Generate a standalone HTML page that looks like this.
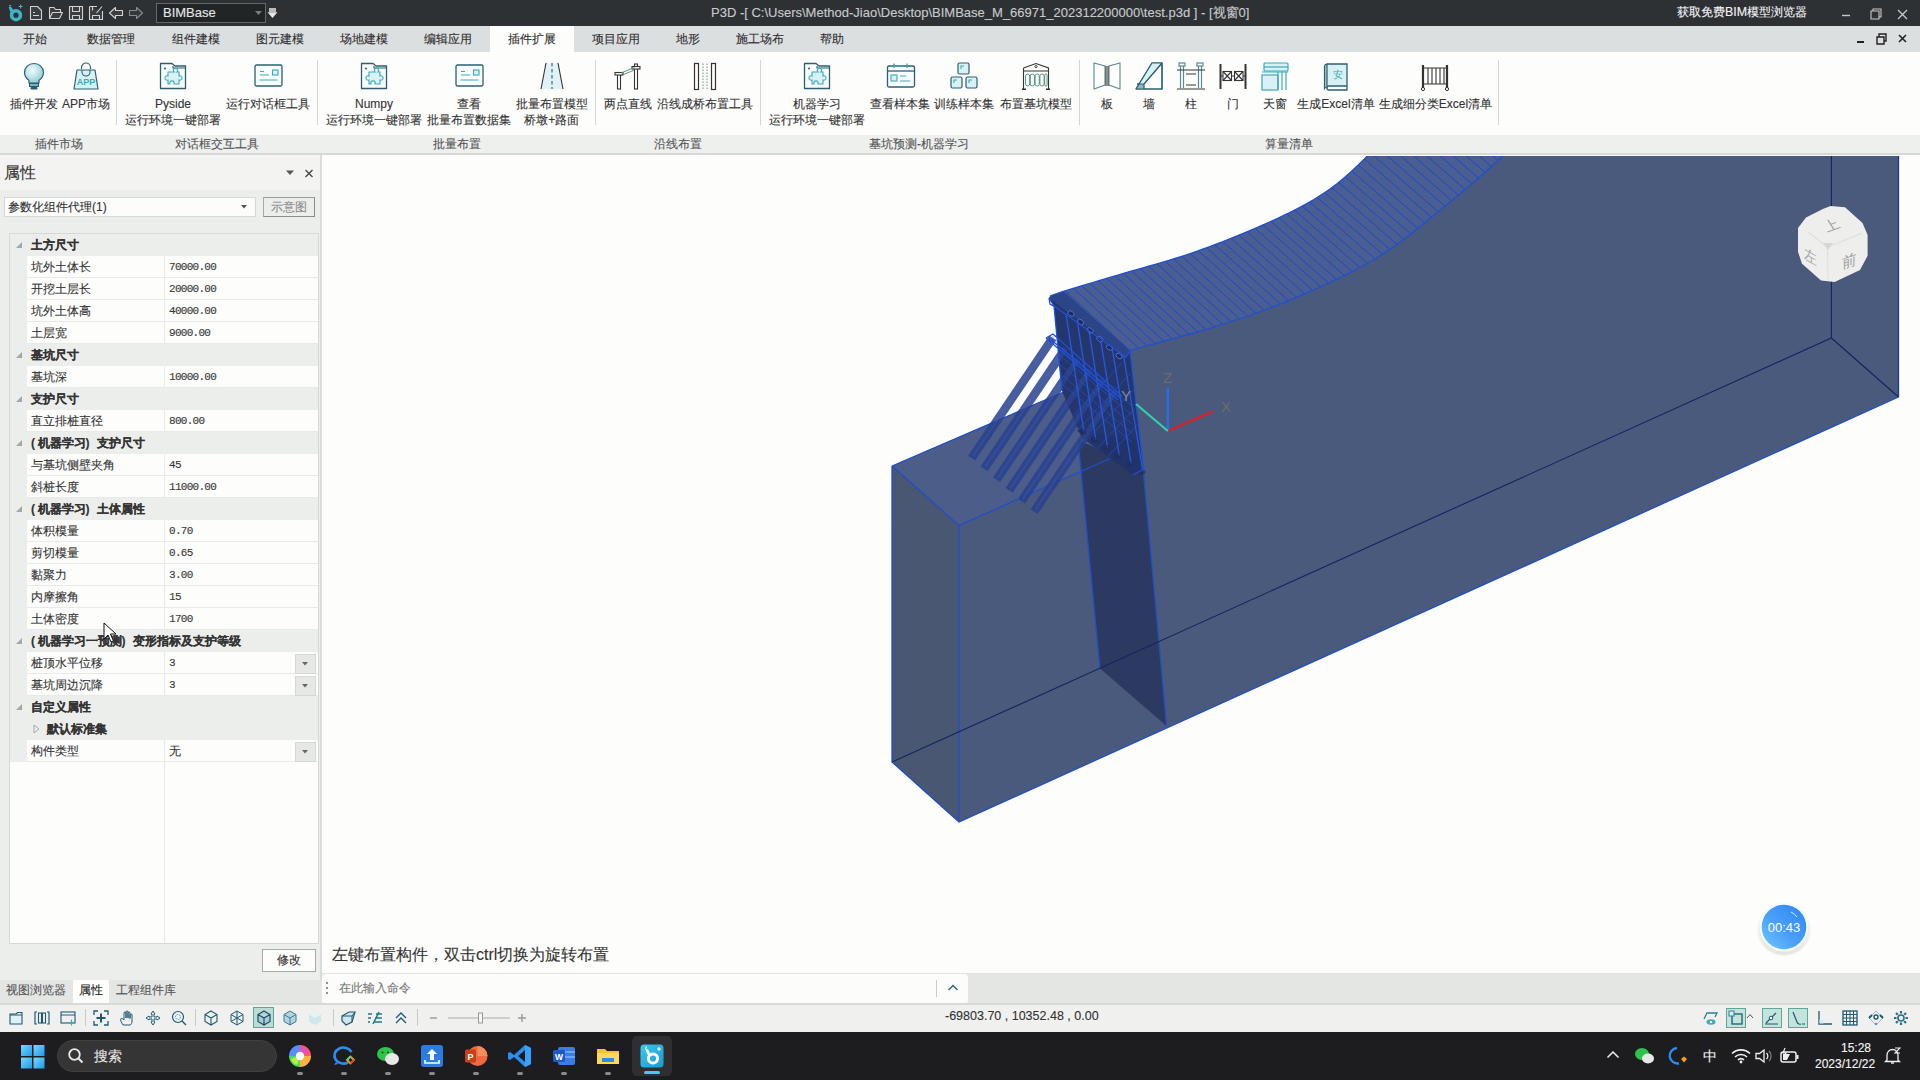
<!DOCTYPE html>
<html><head><meta charset="utf-8">
<style>
*{box-sizing:border-box}
html,body{margin:0;padding:0}
body{width:1920px;height:1080px;overflow:hidden;position:relative;background:#fdfefc;font-family:"Liberation Sans",sans-serif;color:#333}
.a{position:absolute}
.t{position:absolute;white-space:nowrap;line-height:1;-webkit-text-stroke:0.12px currentColor}
svg{position:absolute;overflow:visible}
</style></head><body>

<!-- ===== TITLE BAR ===== -->
<div class="a" style="left:0;top:0;width:1920px;height:26px;background:#2d3134"></div>
<!-- ===== TAB BAR ===== -->
<div class="a" style="left:0;top:26px;width:1920px;height:26px;background:#dcdfe0"></div>
<div class="a" style="left:490px;top:26px;width:84px;height:26px;background:#fdfefc"></div>
<!-- ===== RIBBON ===== -->
<div class="a" style="left:0;top:52px;width:1920px;height:83px;background:#fdfefc"></div>
<div class="a" style="left:0;top:135px;width:1920px;height:18px;background:#eef0ee"></div>
<div class="a" style="left:0;top:153px;width:1920px;height:2px;background:#d6d9d8"></div>


<!-- quick access -->
<svg style="left:0;top:0" width="150" height="26" viewBox="0 0 150 26">
<circle cx="16" cy="15.2" r="4.4" fill="none" stroke="#3db4c4" stroke-width="3.6"/><path d="M10.6 8.6L12.4 12.2" stroke="#3db4c4" stroke-width="3.2" stroke-linecap="round"/>
<path d="M9 5.5H11L9 7.5H11" stroke="#3db4c4" stroke-width="0.9" fill="none"/><path d="M20.6 4.5V8.5M18.6 6.5H22.6" stroke="#3db4c4" stroke-width="1.1"/>
<g fill="#3a3e41" stroke="#d2d2d2" stroke-width="1.1" stroke-linejoin="round">
<path d="M30.5 6.5H37.5L41.5 10.5V19.5H30.5Z"/><path d="M33 12.5H35M33 15.5H39" fill="none"/>
<path d="M49.5 7.5H54L55.5 9.5H60.5V12.5H53L49.5 18.5Z"/><path d="M49.5 18.5L52.5 12.5H62.5L59.5 18.5Z"/>
<path d="M69.5 6.5H82.5V19.5H69.5Z"/><path d="M72.5 6.5V11.5H79.5V6.5M72.5 19.5V15.5H79.5V19.5" fill="none"/>
<path d="M89.5 6.5H97M102.5 11V19.5H89.5V6.5"/><path d="M92.5 6.5V10.5M92.5 19.5V15.5H99.5V19.5M96.5 13L102 6.5" fill="none"/>
<path d="M109.5 13L115.5 7.5V10.5H122.5V15.5H115.5V18.5Z"/>
</g>
<path d="M142.5 13L136.5 7.5V10.5H129.5V15.5H136.5V18.5Z" fill="#34383b" stroke="#8a8d90" stroke-width="1.1" stroke-linejoin="round"/>
</svg>
<!-- title content -->
<div class="a" style="left:156px;top:3px;width:110px;height:20px;background:#222526;border:1px solid #66696b"></div>
<div class="t" style="left:163px;top:6px;font-size:13px;color:#e6e6e6">BIMBase</div>
<svg style="left:255px;top:11px" width="8" height="5"><path d="M0 0H7L3.5 4Z" fill="#7a7d80"/></svg>
<svg style="left:268px;top:8px" width="9" height="11"><path d="M1 1H8M1 3H8M1 5H8L4.5 9Z" stroke="#e8e8e8" stroke-width="1.3" fill="#e8e8e8"/></svg>
<div class="t" style="left:711px;top:5.5px;font-size:13px;color:#c9cacb">P3D -[ C:\Users\Method-Jiao\Desktop\BIMBase_M_66971_202312200000\test.p3d ] - [视窗0]</div>
<div class="t" style="left:1677px;top:6px;font-size:12.4px;color:#f4f4f4">获取免费BIM模型浏览器</div>
<svg style="left:1840px;top:8px" width="80" height="14">
<path d="M2 7.5H10" stroke="#c8c8c8" stroke-width="1.4"/>
<path d="M31 3H39V11H31Z M33 3V1H41V9H39" stroke="#c8c8c8" stroke-width="1.1" fill="none"/>
<path d="M58 2L67 11M67 2L58 11" stroke="#c8c8c8" stroke-width="1.3"/>
</svg>
<!-- tabs -->
<div class="t" style="left:23px;top:33px;font-size:12px;color:#303030">开始</div>
<div class="t" style="left:87px;top:33px;font-size:12px;color:#303030">数据管理</div>
<div class="t" style="left:172px;top:33px;font-size:12px;color:#303030">组件建模</div>
<div class="t" style="left:256px;top:33px;font-size:12px;color:#303030">图元建模</div>
<div class="t" style="left:340px;top:33px;font-size:12px;color:#303030">场地建模</div>
<div class="t" style="left:424px;top:33px;font-size:12px;color:#303030">编辑应用</div>
<div class="t" style="left:508px;top:33px;font-size:12px;color:#303030">插件扩展</div>
<div class="t" style="left:592px;top:33px;font-size:12px;color:#303030">项目应用</div>
<div class="t" style="left:676px;top:33px;font-size:12px;color:#303030">地形</div>
<div class="t" style="left:736px;top:33px;font-size:12px;color:#303030">施工场布</div>
<div class="t" style="left:820px;top:33px;font-size:12px;color:#303030">帮助</div>
<svg style="left:1855px;top:32px" width="60" height="14">
<path d="M2 10H9" stroke="#222" stroke-width="2"/>
<path d="M22 5H29V12H22Z M24 5V2H31V9H29" stroke="#222" stroke-width="1.4" fill="none"/>
<path d="M44 3L51 10M51 3L44 10" stroke="#222" stroke-width="1.6"/>
</svg>
<!-- ribbon separators -->
<div class="a" style="left:116px;top:60px;width:1px;height:65px;background:#d4d6d5"></div>
<div class="a" style="left:317px;top:60px;width:1px;height:65px;background:#d4d6d5"></div>
<div class="a" style="left:595px;top:60px;width:1px;height:65px;background:#d4d6d5"></div>
<div class="a" style="left:760px;top:60px;width:1px;height:65px;background:#d4d6d5"></div>
<div class="a" style="left:1079px;top:60px;width:1px;height:65px;background:#d4d6d5"></div>
<div class="a" style="left:1498px;top:60px;width:1px;height:65px;background:#d4d6d5"></div>
<!-- group labels -->
<div class="t" style="left:35px;top:138px;font-size:12px;color:#555">插件市场</div>
<div class="t" style="left:175px;top:138px;font-size:12px;color:#555">对话框交互工具</div>
<div class="t" style="left:433px;top:138px;font-size:12px;color:#555">批量布置</div>
<div class="t" style="left:654px;top:138px;font-size:12px;color:#555">沿线布置</div>
<div class="t" style="left:869px;top:138px;font-size:12px;color:#555">基坑预测-机器学习</div>
<div class="t" style="left:1265px;top:138px;font-size:12px;color:#555">算量清单</div>
<!--RIBBON-START-->
<svg style="left:19.7px;top:62px" width="28" height="28" viewBox="0 0 28 28"><defs><radialGradient id="bg1" cx="0.4" cy="0.35" r="0.7"><stop offset="0" stop-color="#f4fdff"/><stop offset="1" stop-color="#8cc9d6"/></radialGradient></defs>
<path d="M14 1.5C8.5 1.5 4.5 5.5 4.5 10.5C4.5 14 6.5 16.5 9 18.5V21H19V18.5C21.5 16.5 23.5 14 23.5 10.5C23.5 5.5 19.5 1.5 14 1.5Z" fill="url(#bg1)" stroke="#2b5f70" stroke-width="1.2"/>
<rect x="9.5" y="21.5" width="9" height="3" fill="#6fb3c6" stroke="#2b5f70" stroke-width="1"/><rect x="10.5" y="25" width="7" height="2.5" rx="1" fill="#2b5f70"/></svg>
<div class="t" style="left:-36.3px;top:97.5px;width:140px;text-align:center;font-size:12px;color:#333">插件开发</div>
<svg style="left:72.0px;top:62px" width="28" height="28" viewBox="0 0 28 28"><path d="M9.5 7V5.5A4.5 4.5 0 0 1 18.5 5.5V7" fill="none" stroke="#2b5f70" stroke-width="1.2"/>
<path d="M5 8H23L26 27H2Z" fill="#d9f1f5" stroke="#2b5f70" stroke-width="1.2" stroke-linejoin="round"/>
<path d="M10 8V10A4 4 0 0 0 18 10V8" fill="none" stroke="#2b5f70" stroke-width="1.1"/>
<text x="14" y="23" font-size="9" font-family="Liberation Sans" font-weight="bold" fill="#3aa9b9" text-anchor="middle">APP</text></svg>
<div class="t" style="left:16.0px;top:97.5px;width:140px;text-align:center;font-size:12px;color:#333">APP市场</div>
<svg style="left:159.0px;top:62px" width="28" height="28" viewBox="0 0 28 28"><path d="M1.5 1.5H13L16 4H26.5V26.5H1.5Z" fill="#fafdfd" stroke="#2b5f70" stroke-width="1.3" stroke-linejoin="round"/>
<path d="M14 4V6H26.5" fill="none" stroke="#2b5f70" stroke-width="1.1"/>
<circle cx="6" cy="6.5" r="1" fill="#2b5f70"/>
<path d="M11 10H15A2.2 2.2 0 1 1 18 10H20V14A2.2 2.2 0 1 1 20 18V22H15A2.2 2.2 0 1 0 11 22H9V18A2.2 2.2 0 1 1 9 14V10Z" fill="#d9f1f5" stroke="#3aa9b9" stroke-width="1.1"/></svg>
<div class="t" style="left:103.0px;top:97.5px;width:140px;text-align:center;font-size:12px;color:#333">Pyside</div>
<div class="t" style="left:103.0px;top:114.0px;width:140px;text-align:center;font-size:12px;color:#333">运行环境一键部署</div>
<svg style="left:254.0px;top:62px" width="28" height="28" viewBox="0 0 28 28"><rect x="1" y="3" width="27" height="21" rx="1.5" fill="#fafdfd" stroke="#2b5f70" stroke-width="1.3"/>
<rect x="18.5" y="8" width="5.5" height="5" fill="#d9f1f5" stroke="#3aa9b9" stroke-width="1.1"/>
<path d="M6 9.5H10M6 13H15M5.5 18H23.5" stroke="#3aa9b9" stroke-width="1.1"/></svg>
<div class="t" style="left:198.0px;top:97.5px;width:140px;text-align:center;font-size:12px;color:#333">运行对话框工具</div>
<svg style="left:360.0px;top:62px" width="28" height="28" viewBox="0 0 28 28"><path d="M1.5 1.5H13L16 4H26.5V26.5H1.5Z" fill="#fafdfd" stroke="#2b5f70" stroke-width="1.3" stroke-linejoin="round"/>
<path d="M14 4V6H26.5" fill="none" stroke="#2b5f70" stroke-width="1.1"/>
<circle cx="6" cy="6.5" r="1" fill="#2b5f70"/>
<path d="M11 10H15A2.2 2.2 0 1 1 18 10H20V14A2.2 2.2 0 1 1 20 18V22H15A2.2 2.2 0 1 0 11 22H9V18A2.2 2.2 0 1 1 9 14V10Z" fill="#d9f1f5" stroke="#3aa9b9" stroke-width="1.1"/></svg>
<div class="t" style="left:304.0px;top:97.5px;width:140px;text-align:center;font-size:12px;color:#333">Numpy</div>
<div class="t" style="left:304.0px;top:114.0px;width:140px;text-align:center;font-size:12px;color:#333">运行环境一键部署</div>
<svg style="left:454.7px;top:62px" width="28" height="28" viewBox="0 0 28 28"><rect x="1" y="3" width="27" height="21" rx="1.5" fill="#fafdfd" stroke="#2b5f70" stroke-width="1.3"/>
<rect x="18.5" y="8" width="5.5" height="5" fill="#d9f1f5" stroke="#3aa9b9" stroke-width="1.1"/>
<path d="M6 9.5H10M6 13H15M5.5 18H23.5" stroke="#3aa9b9" stroke-width="1.1"/></svg>
<div class="t" style="left:398.7px;top:97.5px;width:140px;text-align:center;font-size:12px;color:#333">查看</div>
<div class="t" style="left:398.7px;top:114.0px;width:140px;text-align:center;font-size:12px;color:#333">批量布置数据集</div>
<svg style="left:537.7px;top:62px" width="28" height="28" viewBox="0 0 28 28"><path d="M8 1L3 27H25L20 1Z" fill="#dff2f5"/>
<path d="M8 1L3 27M20 1L25 27" stroke="#333" stroke-width="1.1"/>
<path d="M14 1V27" stroke="#2b5f70" stroke-width="1.1" stroke-dasharray="3.5 2.5"/></svg>
<div class="t" style="left:481.7px;top:97.5px;width:140px;text-align:center;font-size:12px;color:#333">批量布置模型</div>
<div class="t" style="left:481.7px;top:114.0px;width:140px;text-align:center;font-size:12px;color:#333">桥墩+路面</div>
<svg style="left:614.0px;top:62px" width="28" height="28" viewBox="0 0 28 28"><g fill="#fff" stroke="#333" stroke-width="1.1"><rect x="3.5" y="11" width="3" height="16"/><rect x="20.5" y="2" width="3" height="25"/><rect x="1" y="10.5" width="8" height="2.5"/><rect x="18" y="4.5" width="8" height="2.5"/></g>
<path d="M7 11L20.5 5.5M7 13.5L20.5 8" stroke="#4a8a7a" stroke-width="0.9"/></svg>
<div class="t" style="left:558.0px;top:97.5px;width:140px;text-align:center;font-size:12px;color:#333">两点直线</div>
<svg style="left:691.0px;top:62px" width="28" height="28" viewBox="0 0 28 28"><rect x="3.5" y="1.5" width="4" height="26" fill="none" stroke="#333" stroke-width="1.2"/>
<rect x="20.5" y="1.5" width="4" height="26" fill="none" stroke="#333" stroke-width="1.2"/>
<path d="M12 1.5V27.5M16 1.5V27.5" stroke="#5a7f7a" stroke-width="0.9" stroke-dasharray="1.6 1.4"/></svg>
<div class="t" style="left:635.0px;top:97.5px;width:140px;text-align:center;font-size:12px;color:#333">沿线成桥布置工具</div>
<svg style="left:803.0px;top:62px" width="28" height="28" viewBox="0 0 28 28"><path d="M1.5 1.5H13L16 4H26.5V26.5H1.5Z" fill="#fafdfd" stroke="#2b5f70" stroke-width="1.3" stroke-linejoin="round"/>
<path d="M14 4V6H26.5" fill="none" stroke="#2b5f70" stroke-width="1.1"/>
<circle cx="6" cy="6.5" r="1" fill="#2b5f70"/>
<path d="M11 10H15A2.2 2.2 0 1 1 18 10H20V14A2.2 2.2 0 1 1 20 18V22H15A2.2 2.2 0 1 0 11 22H9V18A2.2 2.2 0 1 1 9 14V10Z" fill="#d9f1f5" stroke="#3aa9b9" stroke-width="1.1"/></svg>
<div class="t" style="left:747.0px;top:97.5px;width:140px;text-align:center;font-size:12px;color:#333">机器学习</div>
<div class="t" style="left:747.0px;top:114.0px;width:140px;text-align:center;font-size:12px;color:#333">运行环境一键部署</div>
<svg style="left:886.0px;top:62px" width="28" height="28" viewBox="0 0 28 28"><rect x="1.5" y="4" width="27" height="21" rx="1.5" fill="#fafdfd" stroke="#2b5f70" stroke-width="1.3"/>
<path d="M1.5 9H28.5" stroke="#2b5f70" stroke-width="1.3"/>
<path d="M8 1.5V6M21 1.5V6M12 4H17" stroke="#3aa9b9" stroke-width="1.4"/>
<rect x="5" y="13" width="6" height="6" fill="#d9f1f5" stroke="#3aa9b9" stroke-width="1.1"/>
<path d="M14 14H20M14 19H24" stroke="#3aa9b9" stroke-width="1.1"/></svg>
<div class="t" style="left:830.0px;top:97.5px;width:140px;text-align:center;font-size:12px;color:#333">查看样本集</div>
<svg style="left:950.0px;top:62px" width="28" height="28" viewBox="0 0 28 28"><rect x="8" y="1" width="11" height="11" rx="1.5" fill="#d9f1f5" stroke="#2b5f70" stroke-width="1.2"/>
<rect x="1" y="15" width="11" height="11" rx="1.5" fill="#d9f1f5" stroke="#2b5f70" stroke-width="1.2"/>
<rect x="16" y="15" width="11" height="11" rx="1.5" fill="#d9f1f5" stroke="#2b5f70" stroke-width="1.2"/>
<path d="M11 7V4H14M4 21V18H7M19 21V18H22" stroke="#3aa9b9" stroke-width="1.1" fill="none"/></svg>
<div class="t" style="left:894.0px;top:97.5px;width:140px;text-align:center;font-size:12px;color:#333">训练样本集</div>
<svg style="left:1021.8px;top:62px" width="28" height="28" viewBox="0 0 28 28"><path d="M1.5 6L14 1.5L26.5 6V27M1.5 6V27M1.5 9H26.5" stroke="#333" stroke-width="1.1" fill="none"/>
<circle cx="14" cy="4.6" r="1.1" fill="none" stroke="#333" stroke-width="0.9"/>
<path d="M0 27.3H4M24 27.3H28" stroke="#333" stroke-width="1.4"/>
<g fill="none" stroke="#4a8a78" stroke-width="0.9"><rect x="3.5" y="12" width="4.2" height="12" rx="2.1"/><rect x="8.3" y="12" width="4.2" height="12" rx="2.1"/><rect x="13.1" y="12" width="4.2" height="12" rx="2.1"/><rect x="17.9" y="12" width="4.2" height="12" rx="2.1"/><rect x="22.7" y="12" width="2.4" height="12" rx="1.2"/></g></svg>
<div class="t" style="left:965.8px;top:97.5px;width:140px;text-align:center;font-size:12px;color:#333">布置基坑模型</div>
<svg style="left:1092.7px;top:62px" width="28" height="28" viewBox="0 0 28 28"><path d="M1 1L12 4V23L1 27Z M27 1L16 4V23L27 27Z" fill="none" stroke="#5a8a90" stroke-width="1.1"/>
<path d="M13 4V24M15 4V24" stroke="#333" stroke-width="1.1"/></svg>
<div class="t" style="left:1036.7px;top:97.5px;width:140px;text-align:center;font-size:12px;color:#333">板</div>
<svg style="left:1135.0px;top:62px" width="28" height="28" viewBox="0 0 28 28"><path d="M1 27L17 1H27V27Z" fill="none" stroke="#2b5f70" stroke-width="1.2" stroke-linejoin="round"/>
<path d="M2 22H9L27 1" fill="none" stroke="#2b5f70" stroke-width="1.2"/>
<path d="M1 27L17 1H27L9 22H2Z" fill="#d9f1f5"/><rect x="2" y="22" width="7" height="5" fill="#8fb6c2"/>
<path d="M1 27L17 1H27V27H1M2 22H9L27 1M9 22V27" fill="none" stroke="#2b5f70" stroke-width="1.2"/></svg>
<div class="t" style="left:1079.0px;top:97.5px;width:140px;text-align:center;font-size:12px;color:#333">墙</div>
<svg style="left:1176.8px;top:62px" width="28" height="28" viewBox="0 0 28 28"><g fill="none" stroke="#5a8a90" stroke-width="1.2"><rect x="2" y="1" width="6" height="3"/><rect x="20" y="1" width="6" height="3"/><path d="M3.5 4V26M6.5 4V26M21.5 4V26M24.5 4V26"/></g>
<path d="M0 8H28M0 27H28" stroke="#333" stroke-width="1.2"/><path d="M9 12H19M9 23H19" stroke="#333" stroke-width="1.2"/></svg>
<div class="t" style="left:1120.8px;top:97.5px;width:140px;text-align:center;font-size:12px;color:#333">柱</div>
<svg style="left:1219.0px;top:62px" width="28" height="28" viewBox="0 0 28 28"><path d="M1.5 2V27M26.5 2V27" stroke="#333" stroke-width="2"/>
<g fill="none" stroke="#333" stroke-width="1.1"><rect x="4" y="9.5" width="8.5" height="9"/><rect x="15.5" y="9.5" width="8.5" height="9"/><path d="M4 9.5L12.5 18.5M12.5 9.5L4 18.5M15.5 9.5L24 18.5M24 9.5L15.5 18.5"/></g>
<path d="M2 14H4M12.5 14H15.5M24 14H26" stroke="#333" stroke-width="1.1"/></svg>
<div class="t" style="left:1163.0px;top:97.5px;width:140px;text-align:center;font-size:12px;color:#333">门</div>
<svg style="left:1260.6px;top:62px" width="28" height="28" viewBox="0 0 28 28"><rect x="3" y="1" width="24" height="8" rx="1" fill="#d9f1f5" stroke="#3aa9b9" stroke-width="1.2"/>
<path d="M3 5H27" stroke="#3aa9b9" stroke-width="1.2"/>
<rect x="1" y="13" width="16" height="15" fill="#d9f1f5" stroke="#3aa9b9" stroke-width="1.2"/>
<path d="M17 10V28M21 10V28M25 10V28M1 10H27" stroke="#3aa9b9" stroke-width="1.2" fill="none"/></svg>
<div class="t" style="left:1204.6px;top:97.5px;width:140px;text-align:center;font-size:12px;color:#333">天窗</div>
<svg style="left:1322.0px;top:62px" width="28" height="28" viewBox="0 0 28 28"><rect x="5" y="2" width="20" height="22" fill="#d9f1f5"/>
<path d="M5 2H25V24H7A2 2 0 0 0 7 28H25V24" fill="none" stroke="#2b5f70" stroke-width="1.3"/>
<path d="M5 2V25A3 3 0 0 0 2.5 26.5V4A2.5 2.5 0 0 1 5 2Z" fill="#a8c8d0" stroke="#2b5f70" stroke-width="1.2"/>
<text x="15.5" y="15.5" font-size="10" fill="#3aa9b9" text-anchor="middle">安</text></svg>
<div class="t" style="left:1266.0px;top:97.5px;width:140px;text-align:center;font-size:12px;color:#333">生成Excel清单</div>
<svg style="left:1421.4px;top:62px" width="28" height="28" viewBox="0 0 28 28"><path d="M2 3V27M26 3V27" stroke="#333" stroke-width="2.2"/>
<circle cx="2" cy="27" r="1.6" fill="#fff" stroke="#333" stroke-width="1"/><circle cx="26" cy="27" r="1.6" fill="#fff" stroke="#333" stroke-width="1"/>
<path d="M2 6H26M2 22H26M7 6V22M11 6V22M15 6V22M19 6V22M23 6V22" stroke="#333" stroke-width="1.1" fill="none"/></svg>
<div class="t" style="left:1365.4px;top:97.5px;width:140px;text-align:center;font-size:12px;color:#333">生成细分类Excel清单</div>
<!--RIBBON-END-->

<!-- ===== LEFT PANEL ===== -->
<div class="a" style="left:0;top:155px;width:320px;height:825px;background:#eceeeb"></div>
<div class="a" style="left:0;top:155px;width:320px;height:35px;background:#f3f4f2"></div>
<div class="a" style="left:320px;top:155px;width:2px;height:825px;background:#d9dcda"></div>

<!--PANEL-START-->
<!-- panel header -->
<div class="t" style="left:4px;top:165px;font-size:16px;color:#333">属性</div>
<svg style="left:285px;top:169px" width="30" height="10"><path d="M1 1.5H9L5 6Z" fill="#555"/><path d="M20.5 1L27.5 8M27.5 1L20.5 8" stroke="#444" stroke-width="1.3"/></svg>
<div class="a" style="left:4px;top:197px;width:252px;height:20px;background:#fcfdfb;border:1px solid #d5d8d5"></div>
<div class="t" style="left:8px;top:201px;font-size:12px;color:#333">参数化组件代理(1)</div>
<svg style="left:241px;top:205px" width="8" height="5"><path d="M0 0H6L3 3.5Z" fill="#555"/></svg>
<div class="a" style="left:263px;top:197px;width:52px;height:20px;background:#eceeeb;border:1px solid #8a8c8a;border-top-color:#9a9c9a;border-left-color:#aaa"></div>
<div class="t" style="left:271px;top:201px;font-size:12px;color:#8c8c8c">示意图</div>
<!-- grid -->
<div class="a" style="left:9px;top:233px;width:310px;height:711px;background:#fdfefc;border:1px solid #d6d9d6"></div>
<div class="a" style="left:164px;top:760px;width:1px;height:183px;background:#e8eae8"></div>

<div class="a" style="left:10px;top:234px;width:308px;height:22px;background:#eceeeb"></div>
<svg style="left:16px;top:242px" width="7" height="7"><path d="M6 0V6H0Z" fill="#a6a8a6"/></svg>
<div class="t" style="left:31px;top:239px;font-size:12px;font-weight:bold;color:#333">土方尺寸</div>
<div class="a" style="left:10px;top:256px;width:17px;height:22px;background:#eceeeb"></div>
<div class="a" style="left:27px;top:277px;width:291px;height:1px;background:#e8eae8"></div>
<div class="a" style="left:164px;top:256px;width:1px;height:22px;background:#e8eae8"></div>
<div class="t" style="left:31px;top:261px;font-size:12px;color:#333">坑外土体长</div>
<div class="t" style="left:169px;top:262px;font-size:11px;letter-spacing:-0.72px;font-family:'Liberation Mono',monospace;color:#383838">70000.00</div>
<div class="a" style="left:10px;top:278px;width:17px;height:22px;background:#eceeeb"></div>
<div class="a" style="left:27px;top:299px;width:291px;height:1px;background:#e8eae8"></div>
<div class="a" style="left:164px;top:278px;width:1px;height:22px;background:#e8eae8"></div>
<div class="t" style="left:31px;top:283px;font-size:12px;color:#333">开挖土层长</div>
<div class="t" style="left:169px;top:284px;font-size:11px;letter-spacing:-0.72px;font-family:'Liberation Mono',monospace;color:#383838">20000.00</div>
<div class="a" style="left:10px;top:300px;width:17px;height:22px;background:#eceeeb"></div>
<div class="a" style="left:27px;top:321px;width:291px;height:1px;background:#e8eae8"></div>
<div class="a" style="left:164px;top:300px;width:1px;height:22px;background:#e8eae8"></div>
<div class="t" style="left:31px;top:305px;font-size:12px;color:#333">坑外土体高</div>
<div class="t" style="left:169px;top:306px;font-size:11px;letter-spacing:-0.72px;font-family:'Liberation Mono',monospace;color:#383838">40000.00</div>
<div class="a" style="left:10px;top:322px;width:17px;height:22px;background:#eceeeb"></div>
<div class="a" style="left:27px;top:343px;width:291px;height:1px;background:#e8eae8"></div>
<div class="a" style="left:164px;top:322px;width:1px;height:22px;background:#e8eae8"></div>
<div class="t" style="left:31px;top:327px;font-size:12px;color:#333">土层宽</div>
<div class="t" style="left:169px;top:328px;font-size:11px;letter-spacing:-0.72px;font-family:'Liberation Mono',monospace;color:#383838">9000.00</div>
<div class="a" style="left:10px;top:344px;width:308px;height:22px;background:#eceeeb"></div>
<svg style="left:16px;top:352px" width="7" height="7"><path d="M6 0V6H0Z" fill="#a6a8a6"/></svg>
<div class="t" style="left:31px;top:349px;font-size:12px;font-weight:bold;color:#333">基坑尺寸</div>
<div class="a" style="left:10px;top:366px;width:17px;height:22px;background:#eceeeb"></div>
<div class="a" style="left:27px;top:387px;width:291px;height:1px;background:#e8eae8"></div>
<div class="a" style="left:164px;top:366px;width:1px;height:22px;background:#e8eae8"></div>
<div class="t" style="left:31px;top:371px;font-size:12px;color:#333">基坑深</div>
<div class="t" style="left:169px;top:372px;font-size:11px;letter-spacing:-0.72px;font-family:'Liberation Mono',monospace;color:#383838">10000.00</div>
<div class="a" style="left:10px;top:388px;width:308px;height:22px;background:#eceeeb"></div>
<svg style="left:16px;top:396px" width="7" height="7"><path d="M6 0V6H0Z" fill="#a6a8a6"/></svg>
<div class="t" style="left:31px;top:393px;font-size:12px;font-weight:bold;color:#333">支护尺寸</div>
<div class="a" style="left:10px;top:410px;width:17px;height:22px;background:#eceeeb"></div>
<div class="a" style="left:27px;top:431px;width:291px;height:1px;background:#e8eae8"></div>
<div class="a" style="left:164px;top:410px;width:1px;height:22px;background:#e8eae8"></div>
<div class="t" style="left:31px;top:415px;font-size:12px;color:#333">直立排桩直径</div>
<div class="t" style="left:169px;top:416px;font-size:11px;letter-spacing:-0.72px;font-family:'Liberation Mono',monospace;color:#383838">800.00</div>
<div class="a" style="left:10px;top:432px;width:308px;height:22px;background:#eceeeb"></div>
<svg style="left:16px;top:440px" width="7" height="7"><path d="M6 0V6H0Z" fill="#a6a8a6"/></svg>
<div class="t" style="left:31px;top:437px;font-size:12px;font-weight:bold;color:#333"><span style="margin-right:2.5px">(</span>机器学习<span style="margin-right:7px">)</span>支护尺寸</div>
<div class="a" style="left:10px;top:454px;width:17px;height:22px;background:#eceeeb"></div>
<div class="a" style="left:27px;top:475px;width:291px;height:1px;background:#e8eae8"></div>
<div class="a" style="left:164px;top:454px;width:1px;height:22px;background:#e8eae8"></div>
<div class="t" style="left:31px;top:459px;font-size:12px;color:#333">与基坑侧壁夹角</div>
<div class="t" style="left:169px;top:460px;font-size:11px;letter-spacing:-0.72px;font-family:'Liberation Mono',monospace;color:#383838">45</div>
<div class="a" style="left:10px;top:476px;width:17px;height:22px;background:#eceeeb"></div>
<div class="a" style="left:27px;top:497px;width:291px;height:1px;background:#e8eae8"></div>
<div class="a" style="left:164px;top:476px;width:1px;height:22px;background:#e8eae8"></div>
<div class="t" style="left:31px;top:481px;font-size:12px;color:#333">斜桩长度</div>
<div class="t" style="left:169px;top:482px;font-size:11px;letter-spacing:-0.72px;font-family:'Liberation Mono',monospace;color:#383838">11000.00</div>
<div class="a" style="left:10px;top:498px;width:308px;height:22px;background:#eceeeb"></div>
<svg style="left:16px;top:506px" width="7" height="7"><path d="M6 0V6H0Z" fill="#a6a8a6"/></svg>
<div class="t" style="left:31px;top:503px;font-size:12px;font-weight:bold;color:#333"><span style="margin-right:2.5px">(</span>机器学习<span style="margin-right:7px">)</span>土体属性</div>
<div class="a" style="left:10px;top:520px;width:17px;height:22px;background:#eceeeb"></div>
<div class="a" style="left:27px;top:541px;width:291px;height:1px;background:#e8eae8"></div>
<div class="a" style="left:164px;top:520px;width:1px;height:22px;background:#e8eae8"></div>
<div class="t" style="left:31px;top:525px;font-size:12px;color:#333">体积模量</div>
<div class="t" style="left:169px;top:526px;font-size:11px;letter-spacing:-0.72px;font-family:'Liberation Mono',monospace;color:#383838">0.70</div>
<div class="a" style="left:10px;top:542px;width:17px;height:22px;background:#eceeeb"></div>
<div class="a" style="left:27px;top:563px;width:291px;height:1px;background:#e8eae8"></div>
<div class="a" style="left:164px;top:542px;width:1px;height:22px;background:#e8eae8"></div>
<div class="t" style="left:31px;top:547px;font-size:12px;color:#333">剪切模量</div>
<div class="t" style="left:169px;top:548px;font-size:11px;letter-spacing:-0.72px;font-family:'Liberation Mono',monospace;color:#383838">0.65</div>
<div class="a" style="left:10px;top:564px;width:17px;height:22px;background:#eceeeb"></div>
<div class="a" style="left:27px;top:585px;width:291px;height:1px;background:#e8eae8"></div>
<div class="a" style="left:164px;top:564px;width:1px;height:22px;background:#e8eae8"></div>
<div class="t" style="left:31px;top:569px;font-size:12px;color:#333">黏聚力</div>
<div class="t" style="left:169px;top:570px;font-size:11px;letter-spacing:-0.72px;font-family:'Liberation Mono',monospace;color:#383838">3.00</div>
<div class="a" style="left:10px;top:586px;width:17px;height:22px;background:#eceeeb"></div>
<div class="a" style="left:27px;top:607px;width:291px;height:1px;background:#e8eae8"></div>
<div class="a" style="left:164px;top:586px;width:1px;height:22px;background:#e8eae8"></div>
<div class="t" style="left:31px;top:591px;font-size:12px;color:#333">内摩擦角</div>
<div class="t" style="left:169px;top:592px;font-size:11px;letter-spacing:-0.72px;font-family:'Liberation Mono',monospace;color:#383838">15</div>
<div class="a" style="left:10px;top:608px;width:17px;height:22px;background:#eceeeb"></div>
<div class="a" style="left:27px;top:629px;width:291px;height:1px;background:#e8eae8"></div>
<div class="a" style="left:164px;top:608px;width:1px;height:22px;background:#e8eae8"></div>
<div class="t" style="left:31px;top:613px;font-size:12px;color:#333">土体密度</div>
<div class="t" style="left:169px;top:614px;font-size:11px;letter-spacing:-0.72px;font-family:'Liberation Mono',monospace;color:#383838">1700</div>
<div class="a" style="left:10px;top:630px;width:308px;height:22px;background:#eceeeb"></div>
<svg style="left:16px;top:638px" width="7" height="7"><path d="M6 0V6H0Z" fill="#a6a8a6"/></svg>
<div class="t" style="left:31px;top:635px;font-size:12px;font-weight:bold;color:#333"><span style="margin-right:2.5px">(</span>机器学习一预测<span style="margin-right:7px">)</span>变形指标及支护等级</div>
<div class="a" style="left:10px;top:652px;width:17px;height:22px;background:#eceeeb"></div>
<div class="a" style="left:27px;top:673px;width:291px;height:1px;background:#e8eae8"></div>
<div class="a" style="left:164px;top:652px;width:1px;height:22px;background:#e8eae8"></div>
<div class="t" style="left:31px;top:657px;font-size:12px;color:#333">桩顶水平位移</div>
<div class="t" style="left:169px;top:658px;font-size:11px;letter-spacing:-0.72px;font-family:'Liberation Mono',monospace;color:#383838">3</div>
<div class="a" style="left:295px;top:654px;width:21px;height:20px;background:#e6e8e6;border:1px solid #d6d8d6"></div>
<svg style="left:302px;top:662px" width="7" height="4"><path d="M0 0H6L3 3.5Z" fill="#666"/></svg>
<div class="a" style="left:10px;top:674px;width:17px;height:22px;background:#eceeeb"></div>
<div class="a" style="left:27px;top:695px;width:291px;height:1px;background:#e8eae8"></div>
<div class="a" style="left:164px;top:674px;width:1px;height:22px;background:#e8eae8"></div>
<div class="t" style="left:31px;top:679px;font-size:12px;color:#333">基坑周边沉降</div>
<div class="t" style="left:169px;top:680px;font-size:11px;letter-spacing:-0.72px;font-family:'Liberation Mono',monospace;color:#383838">3</div>
<div class="a" style="left:295px;top:676px;width:21px;height:20px;background:#e6e8e6;border:1px solid #d6d8d6"></div>
<svg style="left:302px;top:684px" width="7" height="4"><path d="M0 0H6L3 3.5Z" fill="#666"/></svg>
<div class="a" style="left:10px;top:696px;width:308px;height:22px;background:#eceeeb"></div>
<svg style="left:16px;top:704px" width="7" height="7"><path d="M6 0V6H0Z" fill="#a6a8a6"/></svg>
<div class="t" style="left:31px;top:701px;font-size:12px;font-weight:bold;color:#333">自定义属性</div>
<div class="a" style="left:10px;top:718px;width:308px;height:22px;background:#eceeeb"></div>
<svg style="left:33px;top:724px" width="8" height="10"><path d="M1 1L6 5L1 9Z" fill="none" stroke="#aaa" stroke-width="1"/></svg>
<div class="t" style="left:47px;top:723px;font-size:12px;font-weight:bold;color:#333">默认标准集</div>
<div class="a" style="left:10px;top:740px;width:17px;height:22px;background:#eceeeb"></div>
<div class="a" style="left:27px;top:761px;width:291px;height:1px;background:#e8eae8"></div>
<div class="a" style="left:164px;top:740px;width:1px;height:22px;background:#e8eae8"></div>
<div class="t" style="left:31px;top:745px;font-size:12px;color:#333">构件类型</div>
<div class="t" style="left:169px;top:745px;font-size:12px;color:#333">无</div>
<div class="a" style="left:295px;top:742px;width:21px;height:20px;background:#e6e8e6;border:1px solid #d6d8d6"></div>
<svg style="left:302px;top:750px" width="7" height="4"><path d="M0 0H6L3 3.5Z" fill="#666"/></svg>
<!-- modify button & tabs -->
<div class="a" style="left:262px;top:949px;width:54px;height:23px;background:#fdfefc;border:1px solid #a8aaa8"></div>
<div class="t" style="left:277px;top:954px;font-size:12px;color:#333">修改</div>
<div class="a" style="left:0;top:980px;width:322px;height:24px;background:#e4e6e4"></div>
<div class="a" style="left:73px;top:980px;width:36px;height:24px;background:#fdfefc"></div>
<div class="t" style="left:6px;top:984px;font-size:12px;color:#555">视图浏览器</div>
<div class="t" style="left:79px;top:984px;font-size:12px;color:#222">属性</div>
<div class="t" style="left:116px;top:984px;font-size:12px;color:#555">工程组件库</div>

<!--PANEL-END-->

<!-- ===== VIEWPORT ===== -->
<div class="a" style="left:322px;top:155px;width:1598px;height:818px;background:#fdfefc"></div>

<!--MODEL-START-->
<svg class="model" width="1920" height="1080" style="left:0;top:0" viewBox="0 0 1920 1080">
<defs><clipPath id="vp"><rect x="322" y="156" width="1598" height="817"/></clipPath>
<clipPath id="pw"><path d="M1049.0,298.0 L1063.0,291.0 L1130.0,351.0 L1143.5,469.0 L1133.0,475.0 L1082.0,438.0 L1062.0,391.0 L1054.0,306.0 Z"/></clipPath></defs>
<g clip-path="url(#vp)">
<path d="M892.0,466.0 L1066.0,391.0 L1062.0,391.0 L1054.0,306.0 L1049.0,298.0 L1050.0,296.0 L1051.2,295.6 L1052.2,295.2 L1053.2,294.9 L1054.0,294.6 L1054.8,294.3 L1055.8,293.9 L1056.8,293.6 L1058.0,293.2 L1059.5,292.7 L1061.2,292.1 L1063.4,291.4 L1066.0,290.6 L1069.0,289.7 L1072.3,288.7 L1075.9,287.6 L1079.7,286.4 L1083.8,285.2 L1088.1,283.9 L1092.7,282.6 L1097.4,281.2 L1102.3,279.7 L1107.4,278.2 L1112.6,276.6 L1118.0,275.0 L1123.6,273.3 L1129.5,271.6 L1135.7,269.9 L1142.1,268.1 L1148.7,266.2 L1155.4,264.3 L1162.2,262.3 L1169.0,260.3 L1175.9,258.2 L1182.7,256.1 L1189.4,253.9 L1196.0,251.6 L1202.6,249.2 L1209.3,246.8 L1216.1,244.2 L1223.0,241.6 L1229.8,238.8 L1236.6,236.1 L1243.3,233.3 L1249.9,230.6 L1256.3,227.9 L1262.5,225.2 L1268.4,222.5 L1274.0,220.0 L1279.3,217.6 L1284.3,215.2 L1289.1,212.9 L1293.6,210.6 L1298.0,208.4 L1302.2,206.2 L1306.4,203.9 L1310.4,201.6 L1314.3,199.3 L1318.2,196.9 L1322.1,194.3 L1326.0,191.7 L1329.9,189.0 L1333.6,186.2 L1337.3,183.4 L1340.9,180.5 L1344.5,177.5 L1347.9,174.5 L1351.4,171.4 L1354.7,168.3 L1358.1,165.1 L1361.4,161.9 L1364.7,158.6 L1368.0,155.2 L1371.3,151.8 L1374.5,148.2 L1377.6,144.6 L1380.8,141.0 L1383.9,137.2 L1386.9,133.4 L1390.0,129.6 L1393.0,125.7 L1396.0,121.8 L1399.0,117.9 L1402.0,114.0 L1405.0,110.0 L1408.0,106.0 L1410.9,101.9 L1413.9,97.8 L1416.8,93.7 L1419.7,89.5 L1422.6,85.3 L1425.5,81.1 L1428.4,76.8 L1431.3,72.6 L1434.2,68.4 L1437.1,64.2 L1440.0,60.0 L1898.5,100.0 L1898.5,397.0 L959.0,822.0 L892.0,762.0 Z" fill="#4a5a7c"/>
<path d="M1050.0,296.0 L1051.2,295.6 L1052.2,295.2 L1053.2,294.9 L1054.0,294.6 L1054.8,294.3 L1055.8,293.9 L1056.8,293.6 L1058.0,293.2 L1059.5,292.7 L1061.2,292.1 L1063.4,291.4 L1066.0,290.6 L1069.0,289.7 L1072.3,288.7 L1075.9,287.6 L1079.7,286.4 L1083.8,285.2 L1088.1,283.9 L1092.7,282.6 L1097.4,281.2 L1102.3,279.7 L1107.4,278.2 L1112.6,276.6 L1118.0,275.0 L1123.6,273.3 L1129.5,271.6 L1135.7,269.9 L1142.1,268.1 L1148.7,266.2 L1155.4,264.3 L1162.2,262.3 L1169.0,260.3 L1175.9,258.2 L1182.7,256.1 L1189.4,253.9 L1196.0,251.6 L1202.6,249.2 L1209.3,246.8 L1216.1,244.2 L1223.0,241.6 L1229.8,238.8 L1236.6,236.1 L1243.3,233.3 L1249.9,230.6 L1256.3,227.9 L1262.5,225.2 L1268.4,222.5 L1274.0,220.0 L1279.3,217.6 L1284.3,215.2 L1289.1,212.9 L1293.6,210.6 L1298.0,208.4 L1302.2,206.2 L1306.4,203.9 L1310.4,201.6 L1314.3,199.3 L1318.2,196.9 L1322.1,194.3 L1326.0,191.7 L1329.9,189.0 L1333.6,186.2 L1337.3,183.4 L1340.9,180.5 L1344.5,177.5 L1347.9,174.5 L1351.4,171.4 L1354.7,168.3 L1358.1,165.1 L1361.4,161.9 L1364.7,158.6 L1368.0,155.2 L1371.3,151.8 L1374.5,148.2 L1377.6,144.6 L1380.8,141.0 L1383.9,137.2 L1386.9,133.4 L1390.0,129.6 L1393.0,125.7 L1396.0,121.8 L1399.0,117.9 L1402.0,114.0 L1405.0,110.0 L1408.0,106.0 L1410.9,101.9 L1413.9,97.8 L1416.8,93.7 L1419.7,89.5 L1422.6,85.3 L1425.5,81.1 L1428.4,76.8 L1431.3,72.6 L1434.2,68.4 L1437.1,64.2 L1440.0,60.0 L1590.0,55.0 L1586.7,59.2 L1583.4,63.3 L1580.2,67.5 L1576.9,71.7 L1573.7,75.8 L1570.4,80.0 L1567.1,84.2 L1563.8,88.3 L1560.5,92.5 L1557.0,96.7 L1553.6,100.8 L1550.0,105.0 L1546.4,109.2 L1542.8,113.3 L1539.1,117.5 L1535.5,121.6 L1531.8,125.8 L1528.0,130.0 L1524.2,134.1 L1520.2,138.3 L1516.2,142.5 L1512.1,146.7 L1507.9,150.9 L1503.5,155.2 L1499.0,159.5 L1494.4,163.8 L1489.6,168.2 L1484.7,172.5 L1479.8,176.9 L1474.7,181.3 L1469.6,185.7 L1464.4,190.1 L1459.3,194.4 L1454.0,198.7 L1448.8,203.0 L1443.6,207.3 L1438.4,211.5 L1433.2,215.8 L1428.0,220.1 L1422.8,224.4 L1417.5,228.6 L1412.2,232.9 L1406.8,237.1 L1401.4,241.2 L1395.8,245.2 L1390.2,249.2 L1384.4,253.1 L1378.5,256.8 L1372.4,260.5 L1366.2,264.0 L1359.8,267.5 L1353.3,271.0 L1346.7,274.3 L1340.1,277.6 L1333.4,280.8 L1326.6,284.0 L1319.9,287.0 L1313.2,290.0 L1306.6,292.9 L1300.0,295.8 L1293.5,298.6 L1287.1,301.2 L1280.8,303.8 L1274.5,306.2 L1268.2,308.6 L1261.8,311.0 L1255.5,313.3 L1249.0,315.5 L1242.5,317.8 L1235.8,320.0 L1229.0,322.2 L1222.0,324.5 L1214.8,326.8 L1207.5,329.0 L1200.0,331.2 L1192.4,333.4 L1184.7,335.5 L1176.9,337.7 L1169.0,339.8 L1161.2,341.9 L1153.3,344.1 L1145.5,346.2 L1137.7,348.3 L1130.0,350.5 Z" fill="#4b5e91"/>
<path d="M892.0,466.0 L892.0,762.0 L959.0,822.0 L959.0,525.5 Z" fill="#4a5772"/>
<path d="M892.0,466.0 L1066.0,391.0 L1136.0,447.0 L959.0,525.5 Z" fill="#4c5d8a"/>
<path d="M1078.0,440.0 L1143.0,468.0 L1166.6,726.0 L1100.0,668.6 Z" fill="#2c3a62"/>
<path d="M892.0,466.0 L892.0,762.0 L959.0,822.0 L1898.5,397.0 M959.0,525.5 L959.0,822.0 M892.0,466.0 L959.0,525.5 L1136,447 M892.0,466.0 L1066,391 M1078,440 L1100,668.6 M1143,468 L1166.6,726" stroke="#1f4fc8" stroke-width="1.3" fill="none"/>
<path d="M892.0,762.0 L1831.4,338.0 L1898.5,397.0 M1831.4,338.0 L1831.4,100" stroke="#10265e" stroke-width="1.1" fill="none"/>
<path d="M1898.5,397.0 L1898.5,100" stroke="#1a3a90" stroke-width="1.3" fill="none"/>
<path d="M971.6,458.2L1052.8,337.9 M984.1,468.9L1065.3,348.5 M996.6,479.6L1077.8,359.2 M1009.1,490.3L1090.3,369.9 M1021.6,501.0L1102.8,380.6 M1034.1,511.7L1115.3,391.4" stroke="#28418e" stroke-width="8.5" opacity="0.85" fill="none"/>
<path d="M972.8,456.2L1054.0,335.9 M985.3,466.9L1066.5,346.5 M997.8,477.6L1079.0,357.2 M1010.3,488.3L1091.5,367.9 M1022.8,499.0L1104.0,378.6 M1035.3,509.7L1116.5,389.4" stroke="#4a66b0" stroke-width="2" opacity="0.25" fill="none"/>
<path d="M1076,430 L1133,475 L1143.5,469 L1140,440 Z" fill="#283864"/>
<path d="M1049.0,298.0 L1063.0,291.0 L1130.0,351.0 L1143.5,469.0 L1133.0,475.0 L1082.0,438.0 L1062.0,391.0 L1054.0,306.0 Z" fill="#22336a" opacity="0.92"/>
<g clip-path="url(#pw)"><path d="M971.6,458.2L1052.8,337.9 M984.1,468.9L1065.3,348.5 M996.6,479.6L1077.8,359.2 M1009.1,490.3L1090.3,369.9 M1021.6,501.0L1102.8,380.6 M1034.1,511.7L1115.3,391.4" stroke="#3553a8" stroke-width="6" opacity="0.45" fill="none"/>
<path d="M1052,340.0L1132,406.0 M1052,349.0L1132,415.0 M1052,358.0L1132,424.0 M1052,367.0L1132,433.0 M1052,376.0L1132,442.0 M1064,425.0L1122,363.0 M1073,435.0L1131,373.0 M1082,445.0L1140,383.0 M1091,455.0L1149,393.0 M1100,465.0L1158,403.0" stroke="#2a52c8" stroke-width="0.9" opacity="0.7" fill="none"/></g>
<path d="M1066.0,314.0L1084.0,432.0 M1077.5,322.3L1095.8,440.0 M1089.0,330.6L1107.6,448.0 M1100.5,338.9L1119.4,456.0 M1112.0,347.2L1131.2,464.0 M1123.5,355.5L1143.0,472.0" stroke="#2558dc" stroke-width="1.4" fill="none"/>
<g fill="#1e2c5a" opacity="0.55"><ellipse cx="1083.0" cy="432.0" rx="3.5" ry="2.8"/><ellipse cx="1094.8" cy="440.0" rx="3.5" ry="2.8"/><ellipse cx="1106.6" cy="448.0" rx="3.5" ry="2.8"/><ellipse cx="1118.4" cy="456.0" rx="3.5" ry="2.8"/><ellipse cx="1130.2" cy="464.0" rx="3.5" ry="2.8"/><ellipse cx="1142.0" cy="472.0" rx="3.5" ry="2.8"/></g>
<path d="M1049,298 L1063,291 L1130,351 L1126,357 Z" fill="#2c4488"/>
<g fill="#1c2c60" stroke="#5a7ad0" stroke-width="0.8"><ellipse cx="1071.0" cy="313.5" rx="3.4" ry="2.3" transform="rotate(38 1071.0 313.5)"/><ellipse cx="1080.6" cy="322.0" rx="3.4" ry="2.3" transform="rotate(38 1080.6 322.0)"/><ellipse cx="1090.2" cy="330.5" rx="3.4" ry="2.3" transform="rotate(38 1090.2 330.5)"/><ellipse cx="1099.8" cy="339.0" rx="3.4" ry="2.3" transform="rotate(38 1099.8 339.0)"/><ellipse cx="1109.4" cy="347.5" rx="3.4" ry="2.3" transform="rotate(38 1109.4 347.5)"/><ellipse cx="1119.0" cy="356.0" rx="3.4" ry="2.3" transform="rotate(38 1119.0 356.0)"/></g>
<path d="M1065.2,290.9L1130.0,350.5 M1073.5,288.3L1138.4,348.1 M1081.8,285.8L1146.9,345.8 M1090.1,283.3L1155.3,343.5 M1098.5,280.8L1163.8,341.2 M1106.8,278.3L1172.2,338.9 M1115.1,275.9L1180.6,336.6 M1123.5,273.4L1189.1,334.3 M1131.8,271.0L1197.5,331.9 M1140.2,268.6L1205.9,329.5 M1148.6,266.2L1214.3,326.9 M1157.0,263.8L1222.6,324.3 M1165.3,261.4L1230.9,321.6 M1173.6,258.9L1239.2,318.8 M1181.9,256.3L1247.5,316.0 M1190.2,253.6L1255.8,313.1 M1198.4,250.7L1264.0,310.2 M1206.6,247.8L1272.2,307.1 M1214.7,244.7L1280.4,303.9 M1222.9,241.6L1288.5,300.7 M1231.0,238.4L1296.5,297.3 M1239.0,235.1L1304.6,293.8 M1247.1,231.8L1312.6,290.3 M1255.1,228.4L1320.6,286.7 M1263.0,224.9L1328.5,283.1 M1271.0,221.4L1336.4,279.3 M1278.9,217.7L1344.3,275.5 M1286.7,214.0L1352.1,271.6 M1294.6,210.2L1359.9,267.5 M1302.3,206.1L1367.5,263.3 M1309.9,201.9L1375.1,258.9 M1317.3,197.4L1382.5,254.2 M1324.6,192.6L1389.8,249.4 M1331.7,187.6L1397.0,244.4 M1338.6,182.3L1404.0,239.2 M1345.3,176.8L1410.9,233.9 M1351.8,171.0L1417.8,228.4 M1358.2,165.1L1424.6,222.9 M1364.3,158.9L1431.4,217.3 M1370.4,152.7L1438.1,211.8 M1376.2,146.2L1444.9,206.2 M1381.9,139.6L1451.7,200.7 M1387.4,132.9L1458.4,195.1 M1392.8,126.0L1465.1,189.5 M1398.1,119.1L1471.8,183.8 M1403.3,112.2L1478.4,178.1 M1408.5,105.3L1484.9,172.3 M1413.6,98.2L1491.4,166.5 M1418.6,91.1L1497.9,160.5 M1423.6,83.9L1504.2,154.5 M1428.5,76.7L1510.5,148.4 M1433.4,69.6L1516.6,142.1" stroke="#1d48c8" stroke-width="1" fill="none"/>
<path d="M1050.0,296.0 L1051.2,295.6 L1052.2,295.2 L1053.2,294.9 L1054.0,294.6 L1054.8,294.3 L1055.8,293.9 L1056.8,293.6 L1058.0,293.2 L1059.5,292.7 L1061.2,292.1 L1063.4,291.4 L1066.0,290.6 L1069.0,289.7 L1072.3,288.7 L1075.9,287.6 L1079.7,286.4 L1083.8,285.2 L1088.1,283.9 L1092.7,282.6 L1097.4,281.2 L1102.3,279.7 L1107.4,278.2 L1112.6,276.6 L1118.0,275.0 L1123.6,273.3 L1129.5,271.6 L1135.7,269.9 L1142.1,268.1 L1148.7,266.2 L1155.4,264.3 L1162.2,262.3 L1169.0,260.3 L1175.9,258.2 L1182.7,256.1 L1189.4,253.9 L1196.0,251.6 L1202.6,249.2 L1209.3,246.8 L1216.1,244.2 L1223.0,241.6 L1229.8,238.8 L1236.6,236.1 L1243.3,233.3 L1249.9,230.6 L1256.3,227.9 L1262.5,225.2 L1268.4,222.5 L1274.0,220.0 L1279.3,217.6 L1284.3,215.2 L1289.1,212.9 L1293.6,210.6 L1298.0,208.4 L1302.2,206.2 L1306.4,203.9 L1310.4,201.6 L1314.3,199.3 L1318.2,196.9 L1322.1,194.3 L1326.0,191.7 L1329.9,189.0 L1333.6,186.2 L1337.3,183.4 L1340.9,180.5 L1344.5,177.5 L1347.9,174.5 L1351.4,171.4 L1354.7,168.3 L1358.1,165.1 L1361.4,161.9 L1364.7,158.6 L1368.0,155.2 L1371.3,151.8 L1374.5,148.2 L1377.6,144.6 L1380.8,141.0 L1383.9,137.2 L1386.9,133.4 L1390.0,129.6 L1393.0,125.7 L1396.0,121.8 L1399.0,117.9 L1402.0,114.0 L1405.0,110.0 L1408.0,106.0 L1410.9,101.9 L1413.9,97.8 L1416.8,93.7 L1419.7,89.5 L1422.6,85.3 L1425.5,81.1 L1428.4,76.8 L1431.3,72.6 L1434.2,68.4 L1437.1,64.2 L1440.0,60.0" stroke="#1f50d0" stroke-width="1.3" fill="none"/>
<path d="M1130.0,350.5 L1137.7,348.3 L1145.5,346.2 L1153.3,344.1 L1161.2,341.9 L1169.0,339.8 L1176.9,337.7 L1184.7,335.5 L1192.4,333.4 L1200.0,331.2 L1207.5,329.0 L1214.8,326.8 L1222.0,324.5 L1229.0,322.2 L1235.8,320.0 L1242.5,317.8 L1249.0,315.5 L1255.5,313.3 L1261.8,311.0 L1268.2,308.6 L1274.5,306.2 L1280.8,303.8 L1287.1,301.2 L1293.5,298.6 L1300.0,295.8 L1306.6,292.9 L1313.2,290.0 L1319.9,287.0 L1326.6,284.0 L1333.4,280.8 L1340.1,277.6 L1346.7,274.3 L1353.3,271.0 L1359.8,267.5 L1366.2,264.0 L1372.4,260.5 L1378.5,256.8 L1384.4,253.1 L1390.2,249.2 L1395.8,245.2 L1401.4,241.2 L1406.8,237.1 L1412.2,232.9 L1417.5,228.6 L1422.8,224.4 L1428.0,220.1 L1433.2,215.8 L1438.4,211.5 L1443.6,207.3 L1448.8,203.0 L1454.0,198.7 L1459.3,194.4 L1464.4,190.1 L1469.6,185.7 L1474.7,181.3 L1479.8,176.9 L1484.7,172.5 L1489.6,168.2 L1494.4,163.8 L1499.0,159.5 L1503.5,155.2 L1507.9,150.9 L1512.1,146.7 L1516.2,142.5 L1520.2,138.3 L1524.2,134.1 L1528.0,130.0 L1531.8,125.8 L1535.5,121.6 L1539.1,117.5 L1542.8,113.3 L1546.4,109.2 L1550.0,105.0 L1553.6,100.8 L1557.0,96.7 L1560.5,92.5 L1563.8,88.3 L1567.1,84.2 L1570.4,80.0 L1573.7,75.8 L1576.9,71.7 L1580.2,67.5 L1583.4,63.3 L1586.7,59.2 L1590.0,55.0" stroke="#1f50d0" stroke-width="1.3" fill="none"/>
<path d="M1049,298 L1054,306 L1062,391 M1054,306 L1126,357 L1130,351 L1143.5,469 L1133,475 M1049,338 L1120,398 M1049,298 L1050,304 L1055,307 M1046,338 L1053,334 L1122,396 M1046,338 L1118,400" stroke="#2050d8" stroke-width="1.3" fill="none"/>
</g>
</svg>
<!--MODEL-END-->

<!-- viewport extras -->
<svg style="left:1120px;top:365px" width="120" height="80" viewBox="1120 365 120 80">
<path d="M1167.8 431L1167.8 388" stroke="#2a6ee8" stroke-width="2.4"/>
<path d="M1167.8 431L1213 411.3" stroke="#d8202a" stroke-width="2.4"/>
<path d="M1167.8 431L1136 404" stroke="#30d0b0" stroke-width="2.2"/>
<text x="1167.5" y="383" font-size="15" fill="#6b6b6b" text-anchor="middle" font-family="Liberation Sans">Z</text>
<text x="1226" y="412" font-size="15" fill="#6b6b6b" text-anchor="middle" font-family="Liberation Sans">X</text>
<text x="1126" y="401" font-size="15" fill="#8a8a8a" text-anchor="middle" font-family="Liberation Sans">Y</text>
</svg>
<svg style="left:1790px;top:200px" width="90" height="90" viewBox="1790 200 90 90">
<path d="M1798 227.9L1806 217.5L1823.4 208.8L1830.6 206L1845 207.2L1862.5 223L1867.6 235L1867.6 255.7L1860 270L1834.6 282L1821 280.4L1802 263.7L1798 251.8Z" fill="#eeeeed"/>
<path d="M1808 232L1827.4 247L1861.6 233.4M1827.4 247L1828 279.6" stroke="#e0e0df" stroke-width="1.2" fill="none"/>
<path d="M1823 243L1833 243L1828 250Z" fill="#d6d6d5"/>
<text transform="matrix(0.94 -0.34 0.5 0.8 1834 229)" font-size="15" fill="#a0a0a0" text-anchor="middle">上</text>
<text transform="matrix(0.86 0.5 0 1 1810 262)" font-size="15" fill="#a8a8a8" text-anchor="middle">左</text>
<text transform="matrix(0.94 -0.34 0 1 1849 266)" font-size="15.5" fill="#a0a0a0" text-anchor="middle">前</text>
</svg>
<svg style="left:1752px;top:895px" width="64" height="64" viewBox="0 0 64 64">
<defs><linearGradient id="tmg" x1="1" y1="0" x2="0" y2="1"><stop offset="0" stop-color="#2f84f2"/><stop offset="0.55" stop-color="#4aa0f8"/><stop offset="1" stop-color="#72c8fb"/></linearGradient>
<radialGradient id="tsh" cx="0.5" cy="0.55" r="0.5"><stop offset="0.8" stop-color="#000" stop-opacity="0.10"/><stop offset="1" stop-color="#000" stop-opacity="0"/></radialGradient></defs>
<circle cx="32" cy="33" r="28" fill="url(#tsh)"/>
<circle cx="32" cy="32" r="24.5" fill="#f4fbff"/>
<circle cx="32" cy="32" r="22.3" fill="url(#tmg)"/>
<path d="M39 17Q43 19 45 22" stroke="#d8ecff" stroke-width="1" fill="none"/>
<text x="32" y="37" font-size="13" fill="#fff" text-anchor="middle" font-family="Liberation Sans">00:43</text>
</svg>
<svg style="left:103px;top:622px" width="14" height="22" viewBox="0 0 14 22">
<path d="M1 1V17L5 13L8 20L10.5 19L7.5 12H13Z" fill="#fff" stroke="#111" stroke-width="1" stroke-linejoin="round"/>
</svg>

<!-- ===== COMMAND / STATUS ===== -->
<div class="a" style="left:322px;top:973px;width:1598px;height:31px;background:#e4e6e4"></div>
<div class="a" style="left:0;top:1004px;width:1920px;height:28px;background:#f0f1ef;border-top:1px solid #d8dad8"></div>

<!-- ===== TASKBAR ===== -->
<div class="a" style="left:0;top:1032px;width:1920px;height:48px;background:#1d1d1f"></div>

<!--BOTTOM-START-->
<div class="t" style="left:332px;top:947px;font-size:16px;color:#333">左键布置构件，双击ctrl切换为旋转布置</div>
<div class="a" style="left:322px;top:974px;width:646px;height:30px;background:#fcfdfb;border-radius:4px"></div>
<svg style="left:325px;top:981px" width="4" height="16"><circle cx="2" cy="2" r="1.1" fill="#777"/><circle cx="2" cy="7" r="1.1" fill="#777"/><circle cx="2" cy="12" r="1.1" fill="#777"/></svg>
<div class="t" style="left:339px;top:982px;font-size:12px;color:#777">在此输入命令</div>
<div class="a" style="left:936px;top:980px;width:1px;height:17px;background:#ccc"></div>
<svg style="left:947px;top:984px" width="12" height="8"><path d="M1.5 6L6 1.5L10.5 6" stroke="#2d6a85" stroke-width="1.5" fill="none"/></svg>
<div class="a" style="left:0;top:1003px;width:1920px;height:1px;background:#d8dad8"></div>
<div class="t" style="left:945px;top:1010px;font-size:12.5px;color:#333">-69803.70 , 10352.48 , 0.00</div>

<div class="a" style="left:253px;top:1007px;width:21px;height:21px;background:#b9ddd4;border:1px solid #5aa898"></div>
<svg style="left:7.8px;top:1010px" width="16" height="16" viewBox="0 0 16 16"><path d="M2 4H8L9.5 2.5H14V14H2Z" fill="#def1f5" stroke="#1f5a70" stroke-width="1.1"/><path d="M2 5H14" stroke="#1f5a70" stroke-width="1"/></svg>
<svg style="left:33.8px;top:1010px" width="16" height="16" viewBox="0 0 16 16"><path d="M3 2H1V14H3M13 2H15V14H13" stroke="#1f5a70" stroke-width="1.2" fill="none"/><rect x="4.5" y="3" width="3" height="10" fill="none" stroke="#1f5a70" stroke-width="1.1"/><rect x="8.5" y="3" width="3" height="10" fill="none" stroke="#1f5a70" stroke-width="1.1"/></svg>
<svg style="left:59.8px;top:1010px" width="16" height="16" viewBox="0 0 16 16"><rect x="1" y="2" width="14" height="11" fill="none" stroke="#1f5a70" stroke-width="1.1"/><path d="M1 5H15" stroke="#1f5a70" stroke-width="1"/><path d="M11.5 9.5V15.5M8.5 12.5H14.5" stroke="#3aa9b9" stroke-width="1.2"/></svg>
<svg style="left:92.9px;top:1010px" width="16" height="16" viewBox="0 0 16 16"><path d="M1 5V1H5M11 1H15V5M15 11V15H11M5 15H1V11" stroke="#1f5a70" stroke-width="1.3" fill="none"/><path d="M8 3.5V12.5M3.5 8H12.5" stroke="#1f5a70" stroke-width="2"/></svg>
<svg style="left:119.0px;top:1010px" width="16" height="16" viewBox="0 0 16 16"><path d="M4 15C2 12 1 10 2 8.5C3 8 4 9 5 10V3A1 1 0 0 1 7 3V8V2A1 1 0 0 1 9 2V8V3A1 1 0 0 1 11 3V8.5V5A1 1 0 0 1 13 5V11C13 13 12 15 11 15Z" fill="none" stroke="#1f5a70" stroke-width="1"/></svg>
<svg style="left:145.0px;top:1010px" width="16" height="16" viewBox="0 0 16 16"><path d="M8 1L10 4H9V7L12 7V6L15 8L12 10V9H9V12H10L8 15L6 12H7V9H4V10L1 8L4 6V7H7V4H6Z" fill="none" stroke="#1f5a70" stroke-width="1"/></svg>
<svg style="left:170.8px;top:1010px" width="16" height="16" viewBox="0 0 16 16"><circle cx="7" cy="7" r="5.5" fill="none" stroke="#1f5a70" stroke-width="1.2"/><path d="M11 11L15 15" stroke="#1f5a70" stroke-width="1.4"/><circle cx="7" cy="7" r="2.5" fill="none" stroke="#3aa9b9" stroke-width="1" stroke-dasharray="1.5 1"/></svg>
<svg style="left:203.4px;top:1010px" width="16" height="16" viewBox="0 0 16 16"><path d="M8 1L14 4.5V11.5L8 15L2 11.5V4.5Z M2 4.5L8 8L14 4.5M8 8V15" fill="none" stroke="#1f5a70" stroke-width="1.1"/></svg>
<svg style="left:229.4px;top:1010px" width="16" height="16" viewBox="0 0 16 16"><path d="M8 1L14 4.5V11.5L8 15L2 11.5V4.5Z M2 4.5L14 11.5M14 4.5L2 11.5M8 1V15" fill="none" stroke="#1f5a70" stroke-width="1"/></svg>
<svg style="left:255.7px;top:1010px" width="16" height="16" viewBox="0 0 16 16"><path d="M8 1L14 4.5V11.5L8 15L2 11.5V4.5Z M2 4.5L8 8L14 4.5M8 8V15" fill="#a8cdd6" stroke="#1f4a60" stroke-width="1.2"/></svg>
<svg style="left:281.5px;top:1010px" width="16" height="16" viewBox="0 0 16 16"><path d="M8 1L14 4.5V11.5L8 15L2 11.5V4.5Z" fill="#b6d4de" stroke="#3a7a90" stroke-width="1"/><path d="M2 4.5L8 8L14 4.5M8 8V15" stroke="#3a7a90" stroke-width="1" fill="none"/></svg>
<svg style="left:307.3px;top:1010px" width="16" height="16" viewBox="0 0 16 16"><path d="M8 1L14 4.5V11.5L8 15L2 11.5V4.5Z" fill="#cfe6ea"/><path d="M2 4.5L8 8L14 4.5L8 1Z" fill="#e6f4f6"/></svg>
<svg style="left:340.4px;top:1010px" width="16" height="16" viewBox="0 0 16 16"><path d="M2 6L9 2H15L12 12L6 15L2 11Z" fill="#cfe6ea" stroke="#1f5a70" stroke-width="1.2"/><path d="M2 6L12 6L15 2M12 6V12" stroke="#1f5a70" stroke-width="1" fill="none"/></svg>
<svg style="left:366.8px;top:1010px" width="16" height="16" viewBox="0 0 16 16"><path d="M1 4H5M1 8H4M1 12H3M6 14L12 2M9 4H15M8 8H15M7 12H15" stroke="#1f7a90" stroke-width="1.6"/></svg>
<svg style="left:393.0px;top:1010px" width="16" height="16" viewBox="0 0 16 16"><path d="M3 8L8 3L13 8M3 13L8 8L13 13" stroke="#1f5a70" stroke-width="1.4" fill="none"/></svg>
<div class="a" style="left:84.5px;top:1009px;width:1px;height:17px;background:#c8cac8"></div>
<div class="a" style="left:195.4px;top:1009px;width:1px;height:17px;background:#c8cac8"></div>
<div class="a" style="left:332.6px;top:1009px;width:1px;height:17px;background:#c8cac8"></div>
<div class="a" style="left:416.5px;top:1009px;width:1px;height:17px;background:#c8cac8"></div>
<svg style="left:426px;top:1010px" width="104" height="16"><path d="M4 8H11" stroke="#999" stroke-width="1.4"/><path d="M22 8H84" stroke="#aaa" stroke-width="1"/><rect x="52.5" y="3" width="4" height="10" fill="#f4f4f4" stroke="#999" stroke-width="1"/><path d="M92 8H100M96 4V12" stroke="#999" stroke-width="1.4"/></svg>
<div class="a" style="left:1726px;top:1008px;width:20px;height:20px;background:#c4e3dc;border:1px solid #5aa898"></div>
<div class="a" style="left:1762px;top:1008px;width:20px;height:20px;background:#c4e3dc;border:1px solid #5aa898"></div>
<div class="a" style="left:1788px;top:1008px;width:20px;height:20px;background:#c4e3dc;border:1px solid #5aa898"></div>
<svg style="left:1746px;top:1013px" width="8" height="6"><path d="M1 5L4 1.5L7 5" stroke="#444" stroke-width="0.9" fill="none"/></svg>
<svg style="left:1702px;top:1010px" width="16" height="16" viewBox="0 0 16 16"><path d="M2 9L5 3H15L13 7" fill="none" stroke="#3a7a90" stroke-width="1.3"/><ellipse cx="9" cy="12" rx="4.5" ry="2.8" fill="#3aa9b9"/><circle cx="9" cy="12" r="1.3" fill="#fff"/></svg>
<svg style="left:1728px;top:1010px" width="16" height="16" viewBox="0 0 16 16"><rect x="4" y="4" width="10" height="10" fill="none" stroke="#1f5a70" stroke-width="1.3"/><rect x="1" y="1" width="5" height="5" fill="#d6eef2" stroke="#3a7a90" stroke-width="1"/></svg>
<svg style="left:1763px;top:1010px" width="16" height="16" viewBox="0 0 16 16"><path d="M2 14H15M3 13L13 3" stroke="#1f5a70" stroke-width="1.2" stroke-dasharray="0"/><circle cx="8" cy="8" r="1.8" fill="#fff" stroke="#1f5a70" stroke-width="1"/></svg>
<svg style="left:1790px;top:1010px" width="16" height="16" viewBox="0 0 16 16"><path d="M3 2L7 12Q8 15 11 14M12 14H15" stroke="#1f5a70" stroke-width="1.2" fill="none"/></svg>
<svg style="left:1816px;top:1010px" width="16" height="16" viewBox="0 0 16 16"><path d="M3 1V14H16" stroke="#1f5a70" stroke-width="1.3" fill="none"/><rect x="3.5" y="9.5" width="4" height="4" fill="#d6eef2"/></svg>
<svg style="left:1842px;top:1010px" width="16" height="16" viewBox="0 0 16 16"><rect x="1" y="1" width="14" height="14" fill="none" stroke="#1f5a70" stroke-width="1.3"/><path d="M1 4.5H15M1 8H15M1 11.5H15M4.5 1V15M8 1V15M11.5 1V15" stroke="#1f5a70" stroke-width="1"/></svg>
<svg style="left:1868px;top:1010px" width="16" height="16" viewBox="0 0 16 16"><path d="M8 1L15 8L8 15L1 8Z" fill="none" stroke="#9ab" stroke-width="0.8"/><circle cx="8" cy="7" r="2" fill="none" stroke="#1f5a70" stroke-width="1.4"/><path d="M1 8L4 5M15 8L12 5" stroke="#1f5a70" stroke-width="2"/><circle cx="8" cy="14" r="1.3" fill="#3aa9b9"/></svg>
<svg style="left:1893px;top:1010px" width="16" height="16" viewBox="0 0 16 16"><circle cx="8" cy="8" r="3" fill="none" stroke="#2a6f88" stroke-width="1.6"/><path d="M8 1V3.5M8 12.5V15M1 8H3.5M12.5 8H15M3 3L4.8 4.8M11.2 11.2L13 13M13 3L11.2 4.8M4.8 11.2L3 13" stroke="#2a6f88" stroke-width="2.2"/></svg>
<div class="a" style="left:57px;top:1040px;width:220px;height:32px;background:#353535;border-radius:16px;border:1px solid #404040"></div>
<svg style="left:67px;top:1047px" width="18" height="18"><circle cx="7.5" cy="7.5" r="5.3" fill="none" stroke="#e8e8e8" stroke-width="1.8"/><path d="M11.5 11.5L15.5 15.5" stroke="#e8e8e8" stroke-width="2"/></svg>
<div class="t" style="left:94px;top:1049px;font-size:14px;color:#e6e6e6">搜索</div>
<svg style="left:21px;top:1045px" width="24" height="24"><defs><linearGradient id="wl" x1="0" y1="0" x2="1" y2="1"><stop offset="0" stop-color="#7bd8ff"/><stop offset="1" stop-color="#1a9ae8"/></linearGradient></defs><rect x="0" y="0" width="11" height="11" fill="url(#wl)"/><rect x="12.5" y="0" width="11" height="11" fill="url(#wl)"/><rect x="0" y="12.5" width="11" height="11" fill="url(#wl)"/><rect x="12.5" y="12.5" width="11" height="11" fill="url(#wl)"/></svg>
<div class="a" style="left:632px;top:1036px;width:40px;height:40px;background:#2f2f31;border-radius:5px"></div>

<svg style="left:288px;top:1044px" width="24" height="24" viewBox="0 0 24 24"><path d="M12 1A11 11 0 0 1 23 12L12 12Z" fill="#ff5a5f"/><path d="M23 12A11 11 0 0 1 12 23L12 12Z" fill="#ffb23f"/><path d="M12 23A11 11 0 0 1 1 12L12 12Z" fill="#4cd964"/><path d="M1 12A11 11 0 0 1 12 1L12 12Z" fill="#5a8dff"/><path d="M12 3A9 9 0 0 1 21 9L12 12Z" fill="#e04cd0" opacity="0.8"/><path d="M3 15A9 9 0 0 0 9 21L12 12Z" fill="#d8f040" opacity="0.8"/><circle cx="12" cy="12" r="4.2" fill="#fff"/></svg>
<div class="a" style="left:297px;top:1072px;width:6px;height:3px;border-radius:2px;background:#8a8a8a"></div>
<svg style="left:332px;top:1044px" width="24" height="24" viewBox="0 0 24 24"><path d="M16 18.5A9 8 0 1 1 19.5 8" fill="none" stroke="#2a8ef0" stroke-width="2.6"/><path d="M4 18L2 21L6 20" fill="#2a8ef0"/><path d="M15 16L18.5 12.5L22 16L18.5 19.5Z" fill="none" stroke="#f0a020" stroke-width="1.8"/><path d="M15 16L18.5 12.5" stroke="#3ddc84" stroke-width="1.8"/><path d="M22 16L18.5 19.5" stroke="#e0402a" stroke-width="1.8"/></svg>
<div class="a" style="left:341px;top:1072px;width:6px;height:3px;border-radius:2px;background:#8a8a8a"></div>
<svg style="left:376px;top:1044px" width="24" height="24" viewBox="0 0 24 24"><ellipse cx="9.5" cy="10" rx="8.5" ry="7" fill="#2ec44a"/><ellipse cx="16" cy="15" rx="7" ry="6" fill="#e8e8e8"/><circle cx="6.5" cy="8.5" r="1.1" fill="#145c22"/><circle cx="12" cy="8.5" r="1.1" fill="#145c22"/></svg>
<div class="a" style="left:385px;top:1072px;width:6px;height:3px;border-radius:2px;background:#8a8a8a"></div>
<svg style="left:420px;top:1044px" width="24" height="24" viewBox="0 0 24 24"><rect x="1" y="1" width="22" height="22" rx="3" fill="#2d7de0"/><path d="M12 5L17 10H14V16H10V10H7Z" fill="#fff"/><path d="M5 16V19H19V16" stroke="#fff" stroke-width="1.6" fill="none"/></svg>
<div class="a" style="left:429px;top:1072px;width:6px;height:3px;border-radius:2px;background:#8a8a8a"></div>
<svg style="left:464px;top:1044px" width="24" height="24" viewBox="0 0 24 24"><circle cx="13.5" cy="12" r="10" fill="#ef6a42"/><path d="M13.5 2A10 10 0 0 1 23.5 12H13.5Z" fill="#f58d5a"/><rect x="1" y="5.5" width="11" height="13" rx="1.5" fill="#c8411a"/><text x="6.5" y="16" font-size="9" font-weight="bold" fill="#fff" text-anchor="middle" font-family="Liberation Sans">P</text></svg>
<div class="a" style="left:473px;top:1072px;width:6px;height:3px;border-radius:2px;background:#8a8a8a"></div>
<svg style="left:508px;top:1044px" width="24" height="24" viewBox="0 0 24 24"><path d="M17 1L23 4V20L17 23L6 13L2 16L0 15V9L2 8L6 11Z" fill="#2a8ef0"/><path d="M17 6V18L10 12Z" fill="#1d1d1f"/><path d="M17 1L23 4V20L17 23Z" fill="#3aa0ff"/></svg>
<div class="a" style="left:517px;top:1072px;width:6px;height:3px;border-radius:2px;background:#8a8a8a"></div>
<svg style="left:552px;top:1044px" width="24" height="24" viewBox="0 0 24 24"><rect x="6" y="3" width="17" height="18" rx="2" fill="#3d7ce0"/><path d="M6 8H23M6 13H23" stroke="#6aa6ff" stroke-width="2"/><rect x="1" y="6" width="12" height="12" rx="1.5" fill="#1d5bc4"/><text x="7" y="15.5" font-size="8.5" font-weight="bold" fill="#fff" text-anchor="middle" font-family="Liberation Sans">W</text></svg>
<div class="a" style="left:561px;top:1072px;width:6px;height:3px;border-radius:2px;background:#8a8a8a"></div>
<svg style="left:596px;top:1044px" width="24" height="24" viewBox="0 0 24 24"><path d="M1 5H9L11 7H23V20H1Z" fill="#f5c23c"/><path d="M1 9H23V20H1Z" fill="#ffd75a"/><rect x="6" y="14" width="12" height="4" fill="#2a8ef0"/></svg>
<div class="a" style="left:605px;top:1072px;width:6px;height:3px;border-radius:2px;background:#8a8a8a"></div>
<svg style="left:640px;top:1044px" width="24" height="24" viewBox="0 0 24 24"><defs><linearGradient id="bbg" x1="0" y1="0" x2="1" y2="1"><stop offset="0" stop-color="#3cc8ee"/><stop offset="1" stop-color="#1a9ad0"/></linearGradient></defs><rect x="0.5" y="0.5" width="23" height="23" rx="3.5" fill="url(#bbg)"/><circle cx="13" cy="14.5" r="4.6" fill="none" stroke="#fff" stroke-width="3"/><path d="M7 6.5L9.2 10.5" stroke="#fff" stroke-width="2.6" stroke-linecap="round"/><path d="M19 3V7M17 5H21" stroke="#fff" stroke-width="1.1"/><path d="M5 3H7L5 5H7" stroke="#fff" stroke-width="0.8" fill="none"/></svg>
<div class="a" style="left:644px;top:1071px;width:16px;height:3px;border-radius:2px;background:#4cc2ff"></div>
<svg style="left:1606px;top:1050px" width="14" height="9"><path d="M1.5 7.5L7 2L12.5 7.5" stroke="#f0f0f0" stroke-width="1.5" fill="none"/></svg>
<svg style="left:1634px;top:1046px" width="22" height="20"><ellipse cx="8" cy="8" rx="7" ry="6" fill="#2ec44a"/><ellipse cx="14" cy="12.5" rx="6" ry="5" fill="#e8e8e8"/></svg>
<svg style="left:1667px;top:1046px" width="22" height="22"><path d="M10 2A8 7.5 0 1 0 12 17.5" fill="none" stroke="#2a8ef0" stroke-width="2.4"/><path d="M14 13L17 10.5L20 13L17 16.5Z" fill="#f0a020"/></svg>
<div class="t" style="left:1703px;top:1049px;font-size:14px;color:#f0f0f0">中</div>
<svg style="left:1731px;top:1048px" width="20" height="16"><path d="M1 5.5A13 13 0 0 1 19 5.5M4 9A8.5 8.5 0 0 1 16 9M7 12A4 4 0 0 1 13 12" stroke="#f0f0f0" stroke-width="1.6" fill="none"/><circle cx="10" cy="14" r="1.4" fill="#f0f0f0"/></svg>
<svg style="left:1755px;top:1048px" width="18" height="16"><path d="M1 5.5H4.5L9 2V14L4.5 10.5H1Z" fill="none" stroke="#f0f0f0" stroke-width="1.3"/><path d="M11.5 5A4 4 0 0 1 11.5 11" stroke="#f0f0f0" stroke-width="1.2" fill="none"/><path d="M14 3A7 7 0 0 1 14 13" stroke="#888" stroke-width="1.1" fill="none"/></svg>
<svg style="left:1779px;top:1047px" width="22" height="17"><rect x="2" y="5" width="15" height="10" rx="2" fill="none" stroke="#f0f0f0" stroke-width="1.5"/><rect x="17.5" y="8" width="2" height="4" fill="#f0f0f0"/><path d="M4 7H11L8 13H4Z" fill="#f0f0f0"/><path d="M6 1L4 6H7L5 10" stroke="#f0f0f0" stroke-width="1.2" fill="none"/></svg>
<div class="t" style="left:1841px;top:1042px;font-size:12px;color:#f4f4f4">15:28</div>
<div class="t" style="left:1815px;top:1058px;font-size:12px;color:#f4f4f4">2023/12/22</div>
<svg style="left:1884px;top:1047px" width="18" height="18"><path d="M3 13V8A5.5 5.5 0 0 1 14 8V13L15.5 14.5H1.5Z" fill="none" stroke="#f0f0f0" stroke-width="1.3"/><path d="M7 16H10" stroke="#f0f0f0" stroke-width="1.4"/><path d="M11 1H16L11 6H16" stroke="#f0f0f0" stroke-width="1.1" fill="none"/></svg>

<!--BOTTOM-END-->
</body></html>
